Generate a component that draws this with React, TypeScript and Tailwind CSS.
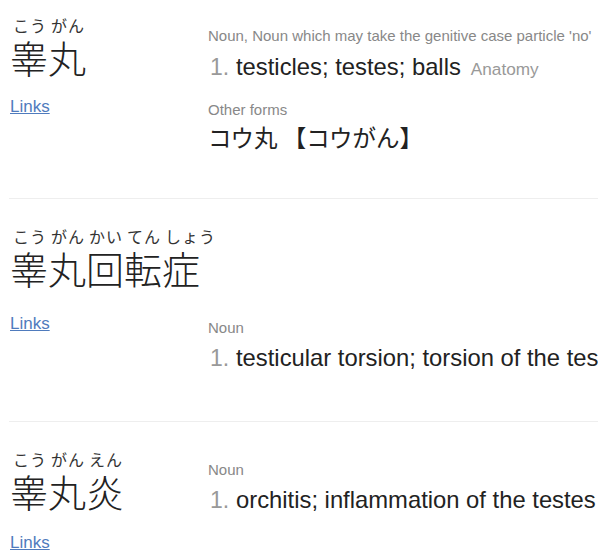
import React from "react";

const JP = "font-['Noto_Sans_CJK_JP','Liberation_Sans',sans-serif]";

function Furigana({ parts }: { parts: string[] }) {
  return (
    <div className={`flex h-[20px] text-[16px] leading-[20px] text-[#333] tracking-[1px] ${JP}`}>
      {parts.map((p, i) => (
        <span key={i} className="w-[38px] shrink-0 whitespace-nowrap pl-[3px]">
          {p}
        </span>
      ))}
    </div>
  );
}

function Word({ text }: { text: string }) {
  return (
    <div className={`h-[44px] text-[38px] leading-[44px] text-[#222] font-light whitespace-nowrap ${JP}`}>
      {text}
    </div>
  );
}

function Links({ className = "" }: { className?: string }) {
  return (
    <a href="#" className={`block text-[17px] leading-[24px] text-[#4f7bbd] underline ${className}`}>
      Links
    </a>
  );
}

function Tags({ text, className = "" }: { text: string; className?: string }) {
  return <div className={`text-[15px] leading-[20px] text-[#888] whitespace-nowrap ${className}`}>{text}</div>;
}

function Meaning({ text, extra, className = "" }: { text: string; extra?: string; className?: string }) {
  return (
    <div className={`flex items-baseline h-[30px] leading-[30px] whitespace-nowrap ${className}`}>
      <span className="text-[23px] text-[#999] w-[28px] pl-[2px] shrink-0">1.</span>
      <span className="text-[23.8px] text-[#222]">{text}</span>
      {extra && <span className="ml-[10px] text-[17.2px] text-[#999]">{extra}</span>}
    </div>
  );
}

export default function App() {
  return (
    <div className="w-[598px] h-[559px] overflow-hidden bg-white pl-[9px] font-['Liberation_Sans',Arial,sans-serif]">
      {/* Entry 1 */}
      <div className="flex pl-[1px] pt-[15px] pb-[46px] border-b border-[#eeeeee]">
        <div className="w-[198px] shrink-0">
          <Furigana parts={["こう", "がん"]} />
          <Word text="睾丸" />
          <Links className="mt-[16px]" />
        </div>
        <div className="pt-[11px] min-w-0">
          <Tags text="Noun, Noun which may take the genitive case particle 'no'" />
          <Meaning className="mt-[6px]" text="testicles; testes; balls" extra="Anatomy" />
          <Tags className="mt-[18px]" text="Other forms" />
          <div className={`mt-[2px] h-[30px] text-[23.5px] leading-[30px] text-[#222] whitespace-nowrap ${JP}`}>
            コウ丸 【コウがん】
          </div>
        </div>
      </div>

      {/* Entry 2 */}
      <div className="pl-[1px] pt-[27px] pb-[48px] border-b border-[#eeeeee]">
        <Furigana parts={["こう", "がん", "かい", "てん", "しょう"]} />
        <Word text="睾丸回転症" />
        <div className="flex mt-[22px]">
          <div className="w-[198px] shrink-0">
            <Links />
          </div>
          <div className="pt-[6px] min-w-0">
            <Tags text="Noun" />
            <Meaning className="mt-[5px]" text="testicular torsion; torsion of the testis" />
          </div>
        </div>
      </div>

      {/* Entry 3 */}
      <div className="flex pl-[1px] pt-[27px]">
        <div className="w-[198px] shrink-0">
          <Furigana parts={["こう", "がん", "えん"]} />
          <Word text="睾丸炎" />
          <Links className="mt-[18px]" />
        </div>
        <div className="pt-[11px] min-w-0">
          <Tags text="Noun" />
          <Meaning className="mt-[5px]" text="orchitis; inflammation of the testes" />
        </div>
      </div>
    </div>
  );
}
